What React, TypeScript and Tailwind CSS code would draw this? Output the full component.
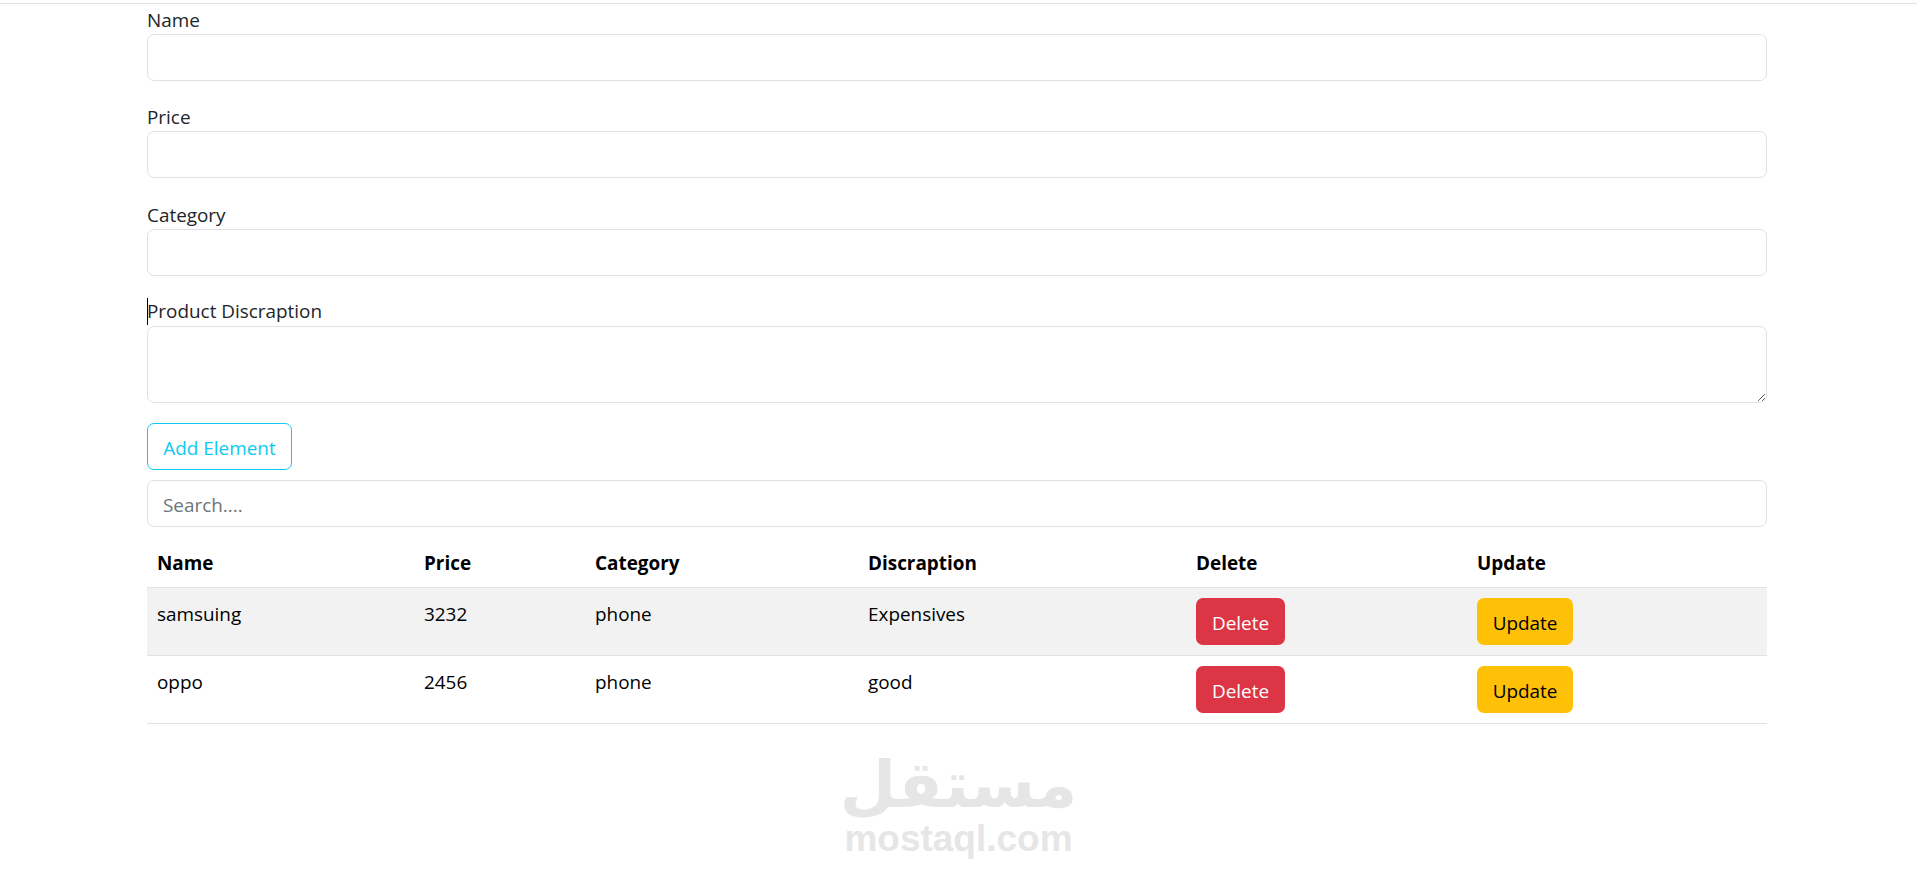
const font = "font-['Open_Sans','Noto_Sans',sans-serif]"

const products = [
  { name: "samsuing", price: "3232", category: "phone", description: "Expensives" },
  { name: "oppo", price: "2456", category: "phone", description: "good" },
]

function Field({ label }: { label: string }) {
  return (
    <div className="mb-[21.33px]">
      <label className="block h-[29px] leading-[30px] text-[#212529]">{label}</label>
      <input className="block h-[47px] w-full rounded-[7px] border border-[#dee2e6] bg-white px-[15px] outline-none" />
    </div>
  )
}

export default function App() {
  return (
    <div className={`${font} h-[876px] overflow-hidden bg-white text-[18.9px]`}>
      <div className="mt-[3px] h-[1px] bg-[#dee2e6]" />
      <div className="mt-[1px] pl-[147px] pr-[150px]">
        <Field label="Name" />
        <Field label="Price" />
        <Field label="Category" />

        {/* Description */}
        <div className="mb-[20px]">
          <label className="relative block h-[29px] leading-[29px] text-[#212529]">
            <span className="absolute left-0 top-[1px] h-[27px] w-px bg-black" />
            Product Discraption
          </label>
          <textarea className="block h-[77px] w-full rounded-[7px] border border-[#dee2e6] bg-white px-[15px] py-[7px] outline-none" />
        </div>

        <button className="block h-[47px] w-[145px] rounded-[7px] border border-[#0dcaf0] pt-[4px] text-[#0dcaf0]">
          Add Element
        </button>

        <input
          placeholder="Search...."
          className="mt-[10px] block h-[47px] w-full rounded-[7px] border border-[#dee2e6] bg-white px-[15px] pt-[4px] outline-none placeholder:text-[#6c757d]"
        />

        {/* Products */}
        <table className="mt-[11px] w-full table-fixed border-collapse text-left text-black">
          <thead>
            <tr className="border-b border-[#dee2e6]">
              <th className="w-[267px] px-[10px] pb-[9px] pt-[11px] font-bold leading-[29px]">Name</th>
              <th className="w-[171px] px-[10px] pb-[9px] pt-[11px] font-bold leading-[29px]">Price</th>
              <th className="w-[273px] px-[10px] pb-[9px] pt-[11px] font-bold leading-[29px]">Category</th>
              <th className="w-[328px] px-[10px] pb-[9px] pt-[11px] font-bold leading-[29px]">Discraption</th>
              <th className="w-[281px] px-[10px] pb-[9px] pt-[11px] font-bold leading-[29px]">Delete</th>
              <th className="px-[10px] pb-[9px] pt-[11px] font-bold leading-[29px]">Update</th>
            </tr>
          </thead>
          <tbody>
            {products.map((p, i) => (
              <tr key={p.name} className={`border-b border-[#dee2e6] ${i === 0 ? "bg-[#f2f2f2]" : ""}`}>
                <td className="h-[68px] px-[10px] py-[10px] align-top leading-[33px]">{p.name}</td>
                <td className="px-[10px] py-[10px] align-top leading-[33px]">{p.price}</td>
                <td className="px-[10px] py-[10px] align-top leading-[33px]">{p.category}</td>
                <td className="px-[10px] py-[10px] align-top leading-[33px]">{p.description}</td>
                <td className="px-[10px] py-[10px] align-top">
                  <button className="block h-[47px] w-[89px] rounded-[7px] bg-[#dc3545] pt-[3px] text-white">Delete</button>
                </td>
                <td className="px-[10px] py-[10px] align-top">
                  <button className="block h-[47px] w-[96px] rounded-[7px] bg-[#ffc107] pt-[3px] text-black">Update</button>
                </td>
              </tr>
            ))}
          </tbody>
        </table>

        {/* Watermark */}
        <div className="mt-[22px] flex flex-col items-center pl-[3px] text-[#e6e6e6]">
          <div dir="rtl" className="h-[73px] font-['DejaVu_Sans',sans-serif] text-[65px] font-bold leading-[78px]">
            مستقل
          </div>
          <div className="font-['Liberation_Sans',sans-serif] text-[37px] font-bold leading-[40px]">mostaql.com</div>
        </div>
      </div>
    </div>
  )
}
